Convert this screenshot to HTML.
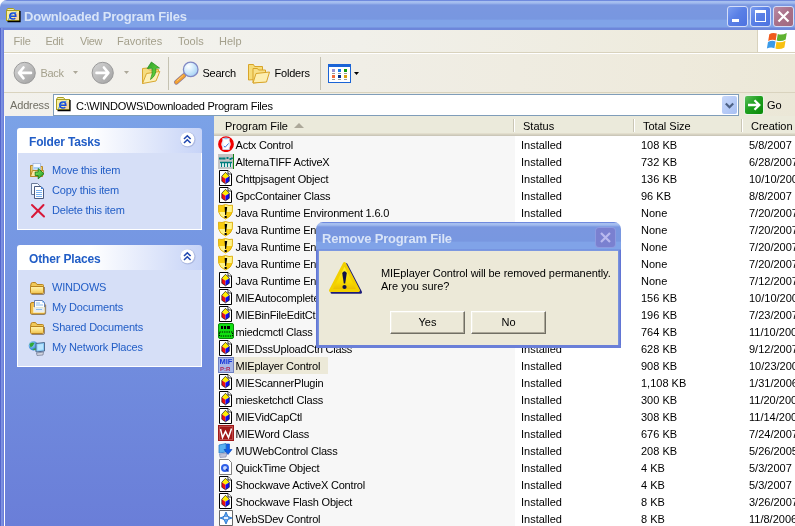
<!DOCTYPE html>
<html><head><meta charset="utf-8">
<style>
*{margin:0;padding:0;box-sizing:border-box}
html,body{width:795px;height:526px;overflow:hidden;background:#fff}
body{position:relative;font-family:"Liberation Sans",sans-serif;font-size:11px;color:#000}
.a{position:absolute}
.t{position:absolute;white-space:nowrap;line-height:13px}
#title{left:0;top:0;width:795px;height:30px;border-radius:7px 0 0 0;
 background:linear-gradient(to bottom,#6f8ade 0,#6f8ade 1px,#a9c0f0 1px,#a2bbee 3px,#7a97e0 5px,#7897e0 19px,#80a3e8 20.5px,#80a3e8 27px,#6d86da 28px,#6d86da 30px)}
#lborder{left:0;top:28px;width:4px;height:498px;background:linear-gradient(to right,#5566cc 0,#5566cc 1px,#7b90e0 1px,#8095e2 2px,#7085dd 3px,#6577d8 4px)}
#menu{left:4px;top:30px;width:791px;height:23px;background:linear-gradient(to right,#f3f3ef 0,#f1f0ea 45%,#eeebdd 85%,#ede9da 100%);border-bottom:1px solid #d8d2bd}
#menuline{left:4px;top:53px;width:791px;height:1px;background:#fff}
#tool{left:4px;top:54px;width:791px;height:39px;background:linear-gradient(to right,#f3f2ee 0,#f0eee6 45%,#eeeadc 85%,#ece8d8 100%);border-bottom:1px solid #d9d3be}
#addr{left:4px;top:93px;width:791px;height:23px;background:linear-gradient(to right,#f2f1ec 0,#efede4 45%,#edeadb 85%,#ebe7d7 100%)}
.grey{color:#a4a08c}
#panel{left:4px;top:116px;width:210px;height:410px;border-left:1px solid #fff;
 background:linear-gradient(to bottom,#7ba2e7,#6a7ed8)}
.box{position:absolute;left:17px;width:185px}
.bh{position:absolute;left:0;top:0;width:185px;height:25px;border-radius:3px 3px 0 0;
 background:linear-gradient(to right,#fff 0,#fff 40%,#c6d3f7 100%)}
.bb{position:absolute;left:0;top:25px;width:185px;background:#d6dff7;border:1px solid #fff;border-top:none}
.bt{position:absolute;left:12px;top:7px;font-weight:bold;font-size:12px;letter-spacing:-0.15px;color:#215dc6;white-space:nowrap;line-height:14px}
.chev{position:absolute;left:164px;top:4px;width:15px;height:15px;border-radius:50%;background:#fff;border:1px solid #c6d3f7;box-shadow:1px 1px 1px #a8b8e0}
.li{position:absolute;left:35px;white-space:nowrap;color:#215dc6;line-height:13px;letter-spacing:-0.2px}
#list{left:214px;top:116px;width:581px;height:410px;background:#fff}
#sortcol{left:214px;top:136px;width:301px;height:390px;background:#f7f7f7}
#hdr{left:214px;top:116px;width:581px;height:20px;background:linear-gradient(to bottom,#ebeadb 0,#ebeadb 17px,#e2decd 17px,#e2decd 18px,#d6d2c2 18px,#d6d2c2 19px,#cbc7b8 19px)}
.hs{position:absolute;top:3px;width:1px;height:13px;background:#cac6b5;box-shadow:1px 0 0 #fff}
.r{position:absolute;height:17px;line-height:19px;white-space:nowrap}
.nm{left:234px;padding-left:1.5px;letter-spacing:-0.2px}
.st{left:521px}
.sz{left:641px}
.dt{left:749px}
.sel{background:#ece9d8;width:94px}
.btn{width:75px;height:23px;border-top:1px solid #fff;border-left:1px solid #fff;border-right:1px solid #716f64;border-bottom:1px solid #716f64;background:#ece9d8;text-align:center;line-height:21px;box-shadow:inset -1px -1px 0 #aca899,inset 1px 1px 0 #f1efe2}
.tbb{width:21px;height:21px;border-radius:3px;border:1px solid #d4ddf8;background:linear-gradient(135deg,#7b9df0 0,#5a80e6 45%,#4d72e0 100%)}
</style></head><body><div style="position:absolute;left:0;top:0;width:795px;height:526px;will-change:transform">

<!-- title bar -->
<div class="a" id="title"></div>
<div class="a" id="lborder"></div>
<svg class="a" style="left:5px;top:7px" width="16" height="16"><path d="M1.5 3.5L2.5 1.5L8.5 1.5L10 3.5Z" fill="#f6f0b0" stroke="#a89e20" stroke-width="1"/>
 <rect x="1.5" y="3.5" width="13" height="10" fill="#f8eea0" stroke="#a89e20" stroke-width="1"/>
 <rect x="9" y="6" width="5" height="7" fill="#f4c8a0" opacity="0.6"/>
 <path d="M15 4V14.5H2.5" fill="none" stroke="#000" stroke-width="1.3"/>
 <path d="M5.3 9.2H10.8Q10.8 6 8 6Q4.8 6 4.8 9Q4.8 12 8 12Q9.5 12 10.3 11.2" fill="none" stroke="#1a4ad8" stroke-width="1.6"/>
 <path d="M3.5 12.8Q5.5 6.5 11.5 5" fill="none" stroke="#2878f0" stroke-width="0.9"/></svg>
<div class="t" style="left:24px;top:9px;font-weight:bold;font-size:13px;letter-spacing:-0.2px;color:#d8e4f8;line-height:15px">Downloaded Program Files</div>

<!-- title buttons -->
<div class="a tbb" style="left:727px;top:6px"></div>
<div class="a" style="left:732px;top:19px;width:7px;height:3px;background:#fff"></div>
<div class="a tbb" style="left:750px;top:6px"></div>
<div class="a" style="left:755px;top:10px;width:11px;height:12px;border:1px solid #fff;border-top:3px solid #fff"></div>
<div class="a tbb" style="left:773px;top:6px;background:linear-gradient(135deg,#b98aa5 0,#a87088 50%,#a06a80 100%)"></div>
<svg class="a" style="left:773px;top:6px" width="21" height="21"><path d="M5.5 5.5L15.5 15.5M15.5 5.5L5.5 15.5" stroke="#fff" stroke-width="2.2"/></svg>

<!-- menu -->
<div class="a" id="menu"></div>
<div class="a" id="menuline"></div>
<div class="t grey" style="left:13.5px;top:35px;letter-spacing:-0.1px">File</div>
<div class="t grey" style="left:45.5px;top:35px;letter-spacing:-0.3px">Edit</div>
<div class="t grey" style="left:80px;top:35px;letter-spacing:-0.4px">View</div>
<div class="t grey" style="left:117px;top:35px">Favorites</div>
<div class="t grey" style="left:178px;top:35px">Tools</div>
<div class="t grey" style="left:219px;top:35px">Help</div>
<div class="a" style="left:757px;top:30px;width:1px;height:22px;background:#d8d2bd"></div>
<div class="a" style="left:758px;top:30px;width:37px;height:22px;background:#fff"></div>
<svg class="a" style="left:766px;top:30px" width="22" height="21">
 <path d="M3.3 4.3Q6.5 2.3 10.8 3.6L9.7 10.4Q6 9 2.2 11Z" fill="#f05a1c"/>
 <path d="M11.8 3.9Q15.8 5.5 20.8 2.9L19.7 9.6Q15.2 12 10.7 10.6Z" fill="#5fb230"/>
 <path d="M2 12Q5.7 10.1 9.5 11.4L8.4 18.2Q4.6 16.6 0.9 18.6Z" fill="#3a9ae8"/>
 <path d="M10.5 11.7Q14.7 13.1 19.5 10.7L18.4 17.4Q13.9 19.9 9.4 18.4Z" fill="#f8c010"/>
</svg>


<!-- toolbar -->
<div class="a" id="tool"></div>
<div class="t grey" style="left:40.5px;top:67px;letter-spacing:-0.3px">Back</div>
<div class="t" style="left:202.5px;top:67px;letter-spacing:-0.25px">Search</div>
<div class="t" style="left:274.5px;top:67px;letter-spacing:-0.2px">Folders</div>
<div class="a" style="left:168px;top:57px;width:1px;height:33px;background:#c5c2b2"></div>
<div class="a" style="left:320px;top:57px;width:1px;height:33px;background:#c5c2b2"></div>

<!-- toolbar icons -->
<svg class="a" style="left:10px;top:58px" width="30" height="30">
 <defs><linearGradient id="gc" x1="0" y1="0" x2="1" y2="1"><stop offset="0" stop-color="#d6d6d6"/><stop offset="1" stop-color="#a0a0a0"/></linearGradient></defs>
 <circle cx="14.7" cy="14.9" r="10.6" fill="url(#gc)" stroke="#9a9a9a" stroke-width="1"/>
 <path d="M13.5 9.5L9 14.9L13.5 20.3M9.5 14.9H21" fill="none" stroke="#fff" stroke-width="2.6" stroke-linecap="round" stroke-linejoin="round"/>
</svg>
<svg class="a" style="left:88px;top:58px" width="30" height="30">
 <circle cx="14.7" cy="14.9" r="10.6" fill="url(#gc)" stroke="#9a9a9a" stroke-width="1"/>
 <path d="M15.9 9.5L20.4 14.9L15.9 20.3M19.9 14.9H8.5" fill="none" stroke="#fff" stroke-width="2.6" stroke-linecap="round" stroke-linejoin="round"/>
</svg>
<svg class="a" style="left:73px;top:71px" width="5" height="3"><path d="M0 0H5L2.5 3Z" fill="#aca899"/></svg>
<svg class="a" style="left:124px;top:71px" width="5" height="3"><path d="M0 0H5L2.5 3Z" fill="#aca899"/></svg>
<svg class="a" style="left:138px;top:58px" width="30" height="30">
 <defs><linearGradient id="ga" x1="0" y1="0" x2="1" y2="1"><stop offset="0" stop-color="#2aa02a"/><stop offset="0.6" stop-color="#58c838"/><stop offset="1" stop-color="#a0f070"/></linearGradient></defs>
 <path d="M4.5 10.5L9.5 10L11.5 12L20.5 11.5L20.5 17L4.5 25.5Z" fill="#f5dc80" stroke="#d8a830" stroke-width="1"/>
 <path d="M4.5 25.5L8.5 15.5L21.8 13.5L18 23Z" fill="#fdf0b8" stroke="#d8a830" stroke-width="1"/>
 <path d="M13.4 4L21.5 10L17.8 10.2Q18.5 17.5 12.5 21.5Q15 15.5 14 10.2L9.2 10.5Z" fill="url(#ga)" stroke="#1f8a1c" stroke-width="0.7"/>
</svg>
<svg class="a" style="left:172px;top:58px" width="30" height="30">
 <path d="M4.3 24.2L12 17.5" stroke="#8a7898" stroke-width="4.6" stroke-linecap="round"/>
 <path d="M4.3 24.2L12 17.5" stroke="#f2a030" stroke-width="3.2" stroke-linecap="round"/>
 <path d="M5 22.8L11 17.6" stroke="#ffc870" stroke-width="1" stroke-linecap="round"/>
 <defs><radialGradient id="gl" cx="0.35" cy="0.3" r="0.75"><stop offset="0" stop-color="#ffffff"/><stop offset="0.45" stop-color="#d4ecfc"/><stop offset="1" stop-color="#a4d0f4"/></radialGradient></defs>
 <circle cx="18.7" cy="11.4" r="7.3" fill="url(#gl)" stroke="#8088c4" stroke-width="1.3"/>
</svg>
<svg class="a" style="left:244px;top:58px" width="30" height="30">
 <path d="M4.5 6.5L9.5 6.5L10.5 8.5L18.5 8.5L18.5 21L4.5 22Z" fill="#f6dc78" stroke="#d8a428" stroke-width="1"/>
 <path d="M9 10.5L13.5 10.5L14.5 12L21.5 12L21.5 23.5L9 25Z" fill="#f8e088" stroke="#d8a428" stroke-width="1"/>
 <path d="M9 25L12 15.5L25.5 14L22.5 24Z" fill="#fdeeb0" stroke="#d8a428" stroke-width="1"/>
</svg>
<svg class="a" style="left:325px;top:58px" width="40" height="30">
 <rect x="3.5" y="6.5" width="22" height="18" fill="#fff" stroke="#1a64d6" stroke-width="1"/>
 <rect x="3" y="6" width="23" height="3" fill="#1a64d6"/>
 <rect x="7" y="11" width="3" height="3" fill="#9a94d4"/><rect x="13" y="11" width="3" height="3" fill="#1a7ae8"/><rect x="19" y="11" width="3" height="3" fill="#109a10"/>
 <rect x="7" y="17" width="3" height="3" fill="#f26a3a"/><rect x="13" y="17" width="3" height="3" fill="#08308a"/><rect x="19" y="17" width="3" height="3" fill="#d8a010"/>
 <rect x="7" y="15" width="3" height="1" fill="#999"/><rect x="13" y="15" width="3" height="1" fill="#999"/><rect x="19" y="15" width="3" height="1" fill="#999"/>
 <rect x="7" y="21" width="3" height="1" fill="#999"/><rect x="13" y="21" width="3" height="1" fill="#999"/><rect x="19" y="21" width="3" height="1" fill="#999"/>
 <path d="M29 14H34L31.5 17Z" fill="#000"/>
</svg>

<!-- address -->
<div class="a" id="addr"></div>
<div class="t" style="left:10px;top:99px;color:#716f64;letter-spacing:-0.15px">Address</div>
<div class="a" style="left:53px;top:94px;width:686px;height:22px;background:#fff;border:1px solid #7f9db9"></div>
<div class="t" style="left:76px;top:100px;letter-spacing:-0.25px">C:\WINDOWS\Downloaded Program Files</div>
<div class="t" style="left:767px;top:99px">Go</div>
<svg class="a" style="left:55px;top:96px" width="16" height="16"><path d="M1.5 3.5L2.5 1.5L8.5 1.5L10 3.5Z" fill="#f6f0b0" stroke="#a89e20" stroke-width="1"/>
 <rect x="1.5" y="3.5" width="13" height="10" fill="#f8eea0" stroke="#a89e20" stroke-width="1"/>
 <rect x="9" y="6" width="5" height="7" fill="#f4c8a0" opacity="0.6"/>
 <path d="M15 4V14.5H2.5" fill="none" stroke="#000" stroke-width="1.3"/>
 <path d="M5.3 9.2H10.8Q10.8 6 8 6Q4.8 6 4.8 9Q4.8 12 8 12Q9.5 12 10.3 11.2" fill="none" stroke="#1a4ad8" stroke-width="1.6"/>
 <path d="M3.5 12.8Q5.5 6.5 11.5 5" fill="none" stroke="#2878f0" stroke-width="0.9"/></svg>
<div class="a" style="left:722px;top:96px;width:15px;height:18px;border-radius:2px;background:linear-gradient(135deg,#c8d8fa 0,#b4c9f6 60%,#a8c0f2 100%)"></div>
<svg class="a" style="left:722px;top:96px" width="15" height="18"><path d="M3.8 7.5L7.5 11.2L11.2 7.5" fill="none" stroke="#4d6185" stroke-width="2.2"/></svg>
<div class="a" style="left:745px;top:96px;width:18px;height:18px;border-radius:2px;background:linear-gradient(135deg,#5cc05c 0,#20a020 45%,#088a08 100%);box-shadow:0 0 0 1px #e8f4e8"></div>
<svg class="a" style="left:745px;top:96px" width="18" height="18"><path d="M3 9H14M9.5 4.2L14.3 9L9.5 13.8" fill="none" stroke="#fff" stroke-width="2.3"/></svg>


<!-- left panel -->
<div class="a" id="panel"></div>
<div class="box" style="top:128px">
  <div class="bh"><div class="bt">Folder Tasks</div><svg class="a" style="left:160px;top:1px" width="21" height="21"><circle cx="10.8" cy="10.8" r="7.8" fill="#a8b4dc" opacity="0.8"/><circle cx="10.3" cy="10.3" r="7" fill="#fff"/><path d="M7 10L10.3 6.8L13.6 10M7 14L10.3 10.8L13.6 14" fill="none" stroke="#2048b0" stroke-width="1.6"/></svg></div>
  <div class="bb" style="height:77px"></div>
  <div class="li" style="top:36px">Move this item</div>
  <div class="li" style="top:56px">Copy this item</div>
  <div class="li" style="top:76px">Delete this item</div>
</div>
<div class="box" style="top:245px">
  <div class="bh"><div class="bt">Other Places</div><svg class="a" style="left:160px;top:1px" width="21" height="21"><circle cx="10.8" cy="10.8" r="7.8" fill="#a8b4dc" opacity="0.8"/><circle cx="10.3" cy="10.3" r="7" fill="#fff"/><path d="M7 10L10.3 6.8L13.6 10M7 14L10.3 10.8L13.6 14" fill="none" stroke="#2048b0" stroke-width="1.6"/></svg></div>
  <div class="bb" style="height:97px"></div>
  <div class="li" style="top:36px">WINDOWS</div>
  <div class="li" style="top:56px">My Documents</div>
  <div class="li" style="top:76px">Shared Documents</div>
  <div class="li" style="top:96px">My Network Places</div>
</div>

<!-- panel icons -->
<svg class="a" style="left:29px;top:163px" width="17" height="17">
 <defs><linearGradient id="mg" x1="0" y1="0" x2="1" y2="1"><stop offset="0" stop-color="#90f070"/><stop offset="1" stop-color="#189818"/></linearGradient></defs>
 <path d="M1.5 2.5H5.5L6.5 3.5H13.5V13.5H1.5Z" fill="#ecc860" stroke="#b88a28" stroke-width="1"/>
 <rect x="4" y="0.5" width="7.5" height="6.5" fill="#f2f8ff" stroke="#98b0d8" stroke-width="0.7"/>
 <rect x="4.5" y="4" width="6.5" height="2" fill="#a8d0f8"/>
 <path d="M1.5 13.5L3.5 7.5H14.5L13.5 13.5Z" fill="#fae8a8" stroke="#b88a28" stroke-width="1"/>
 <path d="M6.2 9H9.2V5.6L15 10.7L9.2 15.8V12.5H6.2Z" fill="url(#mg)" stroke="#0e7010" stroke-width="0.8"/>
</svg>
<svg class="a" style="left:29px;top:182px" width="17" height="18">
 <path d="M2.5 1.5H8.5L10.5 3.5V12.5H2.5Z" fill="#f4f8ff" stroke="#6a7a98" stroke-width="1"/>
 <path d="M5.5 4.5H12L14.5 7V16.5H5.5Z" fill="#fff" stroke="#4a5a80" stroke-width="1"/>
 <path d="M12 4.5L14.5 7H12Z" fill="#3a80e0"/>
 <path d="M7 8.5H13M7 10.5H13M7 12.5H13M7 14.5H13" stroke="#78b0f0" stroke-width="1"/>
</svg>
<svg class="a" style="left:29px;top:202px" width="17" height="17">
 <path d="M3 3L15 14.5M14.5 3L3 15" stroke="#d81838" stroke-width="2" stroke-linecap="round"/>
</svg>
<svg class="a" style="left:29px;top:281px" width="17" height="15"><defs><linearGradient id="fy" x1="0" y1="0" x2="0" y2="1"><stop offset="0" stop-color="#fff4b0"/><stop offset="0.5" stop-color="#fbe080"/><stop offset="1" stop-color="#eec050"/></linearGradient></defs><path d="M2 3Q2 1.5 3.5 1.5H6.5L8 3.5H13.5Q14.5 3.5 14.5 4.5V5.5H1.5Z" fill="#f0c858" stroke="#b88420" stroke-width="1"/><path d="M1.5 5.5H14.5V11.5Q14.5 12.5 13.5 12.5H2.5Q1.5 12.5 1.5 11.5Z" fill="url(#fy)" stroke="#b88420" stroke-width="1"/><path d="M2.5 13.5H14Q15.5 13.5 15.5 12V6" fill="none" stroke="#6a5030" stroke-width="0.9" opacity="0.7"/></svg>
<svg class="a" style="left:29px;top:300px" width="18" height="16">
 <path d="M1.5 4Q1.5 2.5 3 2.5H5L6 3.5H15Q16 3.5 16 4.5V13Q16 14 15 14H2.5Q1.5 14 1.5 13Z" fill="#f0c050" stroke="#b88420" stroke-width="1"/>
 <path d="M5.5 0.5H13.5L15.5 2.5V11H5.5Z" fill="#fff" stroke="#6a80b0" stroke-width="1"/>
 <path d="M13.5 0.5L15.5 2.5H13.5Z" fill="#3890f0"/>
 <path d="M7 3H11M7 5H14M7 7.5H14" stroke="#88bcf0" stroke-width="1"/>
 <rect x="4.5" y="7.5" width="11" height="5" fill="#e8ecf0" stroke="#fff4c0" stroke-width="0.6"/>
 <path d="M7 9.5H13" stroke="#88bcf0" stroke-width="1"/>
 <path d="M2.5 14.5H15.5Q16.7 14.5 16.7 13V5" fill="none" stroke="#5a4a30" stroke-width="0.8" opacity="0.6"/>
</svg>
<svg class="a" style="left:29px;top:321px" width="17" height="15"><defs><linearGradient id="fy" x1="0" y1="0" x2="0" y2="1"><stop offset="0" stop-color="#fff4b0"/><stop offset="0.5" stop-color="#fbe080"/><stop offset="1" stop-color="#eec050"/></linearGradient></defs><path d="M2 3Q2 1.5 3.5 1.5H6.5L8 3.5H13.5Q14.5 3.5 14.5 4.5V5.5H1.5Z" fill="#f0c858" stroke="#b88420" stroke-width="1"/><path d="M1.5 5.5H14.5V11.5Q14.5 12.5 13.5 12.5H2.5Q1.5 12.5 1.5 11.5Z" fill="url(#fy)" stroke="#b88420" stroke-width="1"/><path d="M2.5 13.5H14Q15.5 13.5 15.5 12V6" fill="none" stroke="#6a5030" stroke-width="0.9" opacity="0.7"/></svg>
<svg class="a" style="left:28px;top:340px" width="18" height="16">
 <defs><radialGradient id="gg" cx="0.35" cy="0.35" r="0.7"><stop offset="0" stop-color="#a8e0ff"/><stop offset="1" stop-color="#1870c8"/></radialGradient></defs>
 <circle cx="5.3" cy="5.8" r="4.6" fill="url(#gg)"/><path d="M1.5 4Q3.5 1.5 6.5 3Q5.5 6 2.5 7.5Z" fill="#30a838"/><path d="M4.5 9.5Q6.5 7.5 9.5 8.5L8 10.5Z" fill="#30a838"/>
 <path d="M8 3.5L16.5 2.5V11L8 12Z" fill="#88ccf8" stroke="#506a90" stroke-width="1"/>
 <path d="M9.5 4.5L15 4V9.5L9.5 10.3Z" fill="#b8e4ff"/>
 <path d="M8.5 13L15.5 12L15 15L9 15.5Z" fill="#d0d4e0" stroke="#707890" stroke-width="0.7"/>
</svg>

<!-- list -->
<div class="a" id="list"></div>
<div class="a" id="sortcol"></div>
<div class="a" id="hdr">
  <div class="t" style="left:11px;top:4px">Program File</div>
  <div class="a" style="left:80px;top:7px;width:0;height:0;border-left:5px solid transparent;border-right:5px solid transparent;border-bottom:5px solid #aca899"></div>
  <div class="hs" style="left:299px"></div>
  <div class="t" style="left:309px;top:4px">Status</div>
  <div class="hs" style="left:419px"></div>
  <div class="t" style="left:429px;top:4px">Total Size</div>
  <div class="hs" style="left:527px"></div>
  <div class="t" style="left:537px;top:4px">Creation</div>
</div>
<div id="rows">
<div class="r nm" style="top:136px">Actx Control</div><div class="r st" style="top:136px">Installed</div><div class="r sz" style="top:136px">108 KB</div><div class="r dt" style="top:136px">5/8/2007</div>
<div class="r nm" style="top:153px">AlternaTIFF ActiveX</div><div class="r st" style="top:153px">Installed</div><div class="r sz" style="top:153px">732 KB</div><div class="r dt" style="top:153px">6/28/2007</div>
<div class="r nm" style="top:170px">Chttpjsagent Object</div><div class="r st" style="top:170px">Installed</div><div class="r sz" style="top:170px">136 KB</div><div class="r dt" style="top:170px">10/10/2006</div>
<div class="r nm" style="top:187px">GpcContainer Class</div><div class="r st" style="top:187px">Installed</div><div class="r sz" style="top:187px">96 KB</div><div class="r dt" style="top:187px">8/8/2007</div>
<div class="r nm" style="top:204px">Java Runtime Environment 1.6.0</div><div class="r st" style="top:204px">Installed</div><div class="r sz" style="top:204px">None</div><div class="r dt" style="top:204px">7/20/2007</div>
<div class="r nm" style="top:221px">Java Runtime Environment 1.6.0</div><div class="r st" style="top:221px">Installed</div><div class="r sz" style="top:221px">None</div><div class="r dt" style="top:221px">7/20/2007</div>
<div class="r nm" style="top:238px">Java Runtime Environment 1.6.0</div><div class="r st" style="top:238px">Installed</div><div class="r sz" style="top:238px">None</div><div class="r dt" style="top:238px">7/20/2007</div>
<div class="r nm" style="top:255px">Java Runtime Environment 1.6.0</div><div class="r st" style="top:255px">Installed</div><div class="r sz" style="top:255px">None</div><div class="r dt" style="top:255px">7/20/2007</div>
<div class="r nm" style="top:272px">Java Runtime Environment 1.6.0</div><div class="r st" style="top:272px">Installed</div><div class="r sz" style="top:272px">None</div><div class="r dt" style="top:272px">7/12/2007</div>
<div class="r nm" style="top:289px">MIEAutocompleteCtl Class</div><div class="r st" style="top:289px">Installed</div><div class="r sz" style="top:289px">156 KB</div><div class="r dt" style="top:289px">10/10/2006</div>
<div class="r nm" style="top:306px">MIEBinFileEditCtl Class</div><div class="r st" style="top:306px">Installed</div><div class="r sz" style="top:306px">196 KB</div><div class="r dt" style="top:306px">7/23/2007</div>
<div class="r nm" style="top:323px">miedcmctl Class</div><div class="r st" style="top:323px">Installed</div><div class="r sz" style="top:323px">764 KB</div><div class="r dt" style="top:323px">11/10/2006</div>
<div class="r nm" style="top:340px">MIEDssUploadCtrl Class</div><div class="r st" style="top:340px">Installed</div><div class="r sz" style="top:340px">628 KB</div><div class="r dt" style="top:340px">9/12/2007</div>
<div class="r nm sel" style="top:357px">MIEplayer Control</div><div class="r st" style="top:357px">Installed</div><div class="r sz" style="top:357px">908 KB</div><div class="r dt" style="top:357px">10/23/2006</div>
<div class="r nm" style="top:374px">MIEScannerPlugin</div><div class="r st" style="top:374px">Installed</div><div class="r sz" style="top:374px">1,108 KB</div><div class="r dt" style="top:374px">1/31/2006</div>
<div class="r nm" style="top:391px">miesketchctl Class</div><div class="r st" style="top:391px">Installed</div><div class="r sz" style="top:391px">300 KB</div><div class="r dt" style="top:391px">11/20/2006</div>
<div class="r nm" style="top:408px">MIEVidCapCtl</div><div class="r st" style="top:408px">Installed</div><div class="r sz" style="top:408px">308 KB</div><div class="r dt" style="top:408px">11/14/2006</div>
<div class="r nm" style="top:425px">MIEWord Class</div><div class="r st" style="top:425px">Installed</div><div class="r sz" style="top:425px">676 KB</div><div class="r dt" style="top:425px">7/24/2007</div>
<div class="r nm" style="top:442px">MUWebControl Class</div><div class="r st" style="top:442px">Installed</div><div class="r sz" style="top:442px">208 KB</div><div class="r dt" style="top:442px">5/26/2005</div>
<div class="r nm" style="top:459px">QuickTime Object</div><div class="r st" style="top:459px">Installed</div><div class="r sz" style="top:459px">4 KB</div><div class="r dt" style="top:459px">5/3/2007</div>
<div class="r nm" style="top:476px">Shockwave ActiveX Control</div><div class="r st" style="top:476px">Installed</div><div class="r sz" style="top:476px">4 KB</div><div class="r dt" style="top:476px">5/3/2007</div>
<div class="r nm" style="top:493px">Shockwave Flash Object</div><div class="r st" style="top:493px">Installed</div><div class="r sz" style="top:493px">8 KB</div><div class="r dt" style="top:493px">3/26/2007</div>
<div class="r nm" style="top:510px">WebSDev Control</div><div class="r st" style="top:510px">Installed</div><div class="r sz" style="top:510px">8 KB</div><div class="r dt" style="top:510px">11/8/2006</div>
</div>

<div id="licons">
<svg class="a" style="left:218px;top:136px" width="16" height="16"><circle cx="8" cy="8.2" r="6.3" fill="#fff" stroke="#f00000" stroke-width="3.2"/><rect x="4.8" y="2.5" width="6.4" height="11" fill="#fff" stroke="#c8dcf4" stroke-width="0.8"/><rect x="6.5" y="1.5" width="3" height="1.8" fill="#90c0f0"/><path d="M5.8 10L7.2 11.2L10.5 7.5" fill="none" stroke="#3a78e0" stroke-width="1"/></svg>
<svg class="a" style="left:218px;top:153px" width="16" height="16"><rect x="0" y="1" width="15" height="15" fill="#c4c4c4"/><path d="M15.5 1V16.5H0" fill="none" stroke="#108010" stroke-width="1"/><path d="M1 5.5H3M4 4.5V6.5M5 5.5H7.5M8.5 5H10.5M11.5 6H13.5M14 4.5V6" stroke="#007c7c" stroke-width="1.8"/><rect x="2" y="9" width="12" height="5" fill="#fff"/><path d="M3.5 9V14M6.5 9V14M9.5 9V14M12.5 9V14M2 9.5H14" stroke="#007c7c" stroke-width="1.3"/></svg>
<svg class="a" style="left:218px;top:170px" width="16" height="16"><path d="M1.5 0.5H10L13.5 4V15.5H1.5Z" fill="#fff" stroke="#000" stroke-width="1"/><path d="M10 0.5V4H13.5" fill="#fff" stroke="#000" stroke-width="0.8"/><path d="M7.5 2.3L11.3 6.2L7.5 8.7L3.8 6.2Z" fill="#ffee00"/><path d="M3.8 6.2L7.5 8.7V13.8L3.8 11.3Z" fill="#f01010"/><path d="M7.5 8.7L11.3 6.2V11.3L7.5 13.8Z" fill="#1010f0"/><path d="M3.8 6.2L7.5 2.3L11.3 6.2V11.3L7.5 13.8L3.8 11.3Z" fill="none" stroke="#000" stroke-width="0.6"/></svg>
<svg class="a" style="left:218px;top:187px" width="16" height="16"><path d="M1.5 0.5H10L13.5 4V15.5H1.5Z" fill="#fff" stroke="#000" stroke-width="1"/><path d="M10 0.5V4H13.5" fill="#fff" stroke="#000" stroke-width="0.8"/><path d="M7.5 2.3L11.3 6.2L7.5 8.7L3.8 6.2Z" fill="#ffee00"/><path d="M3.8 6.2L7.5 8.7V13.8L3.8 11.3Z" fill="#f01010"/><path d="M7.5 8.7L11.3 6.2V11.3L7.5 13.8Z" fill="#1010f0"/><path d="M3.8 6.2L7.5 2.3L11.3 6.2V11.3L7.5 13.8L3.8 11.3Z" fill="none" stroke="#000" stroke-width="0.6"/></svg>
<svg class="a" style="left:218px;top:204px" width="16" height="16"><defs><clipPath id="jc"><path d="M0.5 1.2Q4 2.2 7.5 0.5Q11 2.2 14.5 1.2L14.3 8Q13.5 12.5 7.5 15Q1.5 12.5 0.7 8Z"/></clipPath></defs><g clip-path="url(#jc)"><rect x="0" y="0" width="7.5" height="8" fill="#f8cc10"/><rect x="7.5" y="0" width="8" height="8" fill="#fff48a"/><rect x="0" y="8" width="7.5" height="8" fill="#fff48a"/><rect x="7.5" y="8" width="8" height="8" fill="#f8cc10"/></g><path d="M0.5 1.2Q4 2.2 7.5 0.5Q11 2.2 14.5 1.2L14.3 8Q13.5 12.5 7.5 15Q1.5 12.5 0.7 8Z" fill="none" stroke="#dcac00" stroke-width="0.9"/><path d="M6.6 3H9.2L8.1 11H7.1Z" fill="#000"/><rect x="6.6" y="12" width="2.1" height="2" fill="#000"/></svg>
<svg class="a" style="left:218px;top:221px" width="16" height="16"><defs><clipPath id="jc"><path d="M0.5 1.2Q4 2.2 7.5 0.5Q11 2.2 14.5 1.2L14.3 8Q13.5 12.5 7.5 15Q1.5 12.5 0.7 8Z"/></clipPath></defs><g clip-path="url(#jc)"><rect x="0" y="0" width="7.5" height="8" fill="#f8cc10"/><rect x="7.5" y="0" width="8" height="8" fill="#fff48a"/><rect x="0" y="8" width="7.5" height="8" fill="#fff48a"/><rect x="7.5" y="8" width="8" height="8" fill="#f8cc10"/></g><path d="M0.5 1.2Q4 2.2 7.5 0.5Q11 2.2 14.5 1.2L14.3 8Q13.5 12.5 7.5 15Q1.5 12.5 0.7 8Z" fill="none" stroke="#dcac00" stroke-width="0.9"/><path d="M6.6 3H9.2L8.1 11H7.1Z" fill="#000"/><rect x="6.6" y="12" width="2.1" height="2" fill="#000"/></svg>
<svg class="a" style="left:218px;top:238px" width="16" height="16"><defs><clipPath id="jc"><path d="M0.5 1.2Q4 2.2 7.5 0.5Q11 2.2 14.5 1.2L14.3 8Q13.5 12.5 7.5 15Q1.5 12.5 0.7 8Z"/></clipPath></defs><g clip-path="url(#jc)"><rect x="0" y="0" width="7.5" height="8" fill="#f8cc10"/><rect x="7.5" y="0" width="8" height="8" fill="#fff48a"/><rect x="0" y="8" width="7.5" height="8" fill="#fff48a"/><rect x="7.5" y="8" width="8" height="8" fill="#f8cc10"/></g><path d="M0.5 1.2Q4 2.2 7.5 0.5Q11 2.2 14.5 1.2L14.3 8Q13.5 12.5 7.5 15Q1.5 12.5 0.7 8Z" fill="none" stroke="#dcac00" stroke-width="0.9"/><path d="M6.6 3H9.2L8.1 11H7.1Z" fill="#000"/><rect x="6.6" y="12" width="2.1" height="2" fill="#000"/></svg>
<svg class="a" style="left:218px;top:255px" width="16" height="16"><defs><clipPath id="jc"><path d="M0.5 1.2Q4 2.2 7.5 0.5Q11 2.2 14.5 1.2L14.3 8Q13.5 12.5 7.5 15Q1.5 12.5 0.7 8Z"/></clipPath></defs><g clip-path="url(#jc)"><rect x="0" y="0" width="7.5" height="8" fill="#f8cc10"/><rect x="7.5" y="0" width="8" height="8" fill="#fff48a"/><rect x="0" y="8" width="7.5" height="8" fill="#fff48a"/><rect x="7.5" y="8" width="8" height="8" fill="#f8cc10"/></g><path d="M0.5 1.2Q4 2.2 7.5 0.5Q11 2.2 14.5 1.2L14.3 8Q13.5 12.5 7.5 15Q1.5 12.5 0.7 8Z" fill="none" stroke="#dcac00" stroke-width="0.9"/><path d="M6.6 3H9.2L8.1 11H7.1Z" fill="#000"/><rect x="6.6" y="12" width="2.1" height="2" fill="#000"/></svg>
<svg class="a" style="left:218px;top:272px" width="16" height="16"><path d="M1.5 0.5H10L13.5 4V15.5H1.5Z" fill="#fff" stroke="#000" stroke-width="1"/><path d="M10 0.5V4H13.5" fill="#fff" stroke="#000" stroke-width="0.8"/><path d="M7.5 2.3L11.3 6.2L7.5 8.7L3.8 6.2Z" fill="#ffee00"/><path d="M3.8 6.2L7.5 8.7V13.8L3.8 11.3Z" fill="#f01010"/><path d="M7.5 8.7L11.3 6.2V11.3L7.5 13.8Z" fill="#1010f0"/><path d="M3.8 6.2L7.5 2.3L11.3 6.2V11.3L7.5 13.8L3.8 11.3Z" fill="none" stroke="#000" stroke-width="0.6"/></svg>
<svg class="a" style="left:218px;top:289px" width="16" height="16"><path d="M1.5 0.5H10L13.5 4V15.5H1.5Z" fill="#fff" stroke="#000" stroke-width="1"/><path d="M10 0.5V4H13.5" fill="#fff" stroke="#000" stroke-width="0.8"/><path d="M7.5 2.3L11.3 6.2L7.5 8.7L3.8 6.2Z" fill="#ffee00"/><path d="M3.8 6.2L7.5 8.7V13.8L3.8 11.3Z" fill="#f01010"/><path d="M7.5 8.7L11.3 6.2V11.3L7.5 13.8Z" fill="#1010f0"/><path d="M3.8 6.2L7.5 2.3L11.3 6.2V11.3L7.5 13.8L3.8 11.3Z" fill="none" stroke="#000" stroke-width="0.6"/></svg>
<svg class="a" style="left:218px;top:306px" width="16" height="16"><path d="M1.5 0.5H10L13.5 4V15.5H1.5Z" fill="#fff" stroke="#000" stroke-width="1"/><path d="M10 0.5V4H13.5" fill="#fff" stroke="#000" stroke-width="0.8"/><path d="M7.5 2.3L11.3 6.2L7.5 8.7L3.8 6.2Z" fill="#ffee00"/><path d="M3.8 6.2L7.5 8.7V13.8L3.8 11.3Z" fill="#f01010"/><path d="M7.5 8.7L11.3 6.2V11.3L7.5 13.8Z" fill="#1010f0"/><path d="M3.8 6.2L7.5 2.3L11.3 6.2V11.3L7.5 13.8L3.8 11.3Z" fill="none" stroke="#000" stroke-width="0.6"/></svg>
<svg class="a" style="left:218px;top:323px" width="16" height="16"><rect x="0.5" y="0.5" width="15" height="15" rx="1.5" fill="#10e010" stroke="#088808" stroke-width="1"/><path d="M3 3H5V6H3ZM6 3H8V6H6ZM9 3H12V6H9Z" fill="#000"/><path d="M1.5 9H14.5V13H1.5Z" fill="none" stroke="#000" stroke-width="1" stroke-dasharray="1.3 1"/></svg>
<svg class="a" style="left:218px;top:340px" width="16" height="16"><path d="M1.5 0.5H10L13.5 4V15.5H1.5Z" fill="#fff" stroke="#000" stroke-width="1"/><path d="M10 0.5V4H13.5" fill="#fff" stroke="#000" stroke-width="0.8"/><path d="M7.5 2.3L11.3 6.2L7.5 8.7L3.8 6.2Z" fill="#ffee00"/><path d="M3.8 6.2L7.5 8.7V13.8L3.8 11.3Z" fill="#f01010"/><path d="M7.5 8.7L11.3 6.2V11.3L7.5 13.8Z" fill="#1010f0"/><path d="M3.8 6.2L7.5 2.3L11.3 6.2V11.3L7.5 13.8L3.8 11.3Z" fill="none" stroke="#000" stroke-width="0.6"/></svg>
<svg class="a" style="left:218px;top:357px" width="16" height="16"><rect x="0.5" y="0.5" width="15" height="15" fill="#a8b8e8" stroke="#7080c0" stroke-width="1"/><text x="1.5" y="7.3" font-family="Liberation Sans" font-size="7.5" font-weight="bold" fill="#1838d8">MIF</text><text x="2" y="14" font-family="Liberation Sans" font-size="6" font-weight="bold" fill="#b02858">P:R</text></svg>
<svg class="a" style="left:218px;top:374px" width="16" height="16"><path d="M1.5 0.5H10L13.5 4V15.5H1.5Z" fill="#fff" stroke="#000" stroke-width="1"/><path d="M10 0.5V4H13.5" fill="#fff" stroke="#000" stroke-width="0.8"/><path d="M7.5 2.3L11.3 6.2L7.5 8.7L3.8 6.2Z" fill="#ffee00"/><path d="M3.8 6.2L7.5 8.7V13.8L3.8 11.3Z" fill="#f01010"/><path d="M7.5 8.7L11.3 6.2V11.3L7.5 13.8Z" fill="#1010f0"/><path d="M3.8 6.2L7.5 2.3L11.3 6.2V11.3L7.5 13.8L3.8 11.3Z" fill="none" stroke="#000" stroke-width="0.6"/></svg>
<svg class="a" style="left:218px;top:391px" width="16" height="16"><path d="M1.5 0.5H10L13.5 4V15.5H1.5Z" fill="#fff" stroke="#000" stroke-width="1"/><path d="M10 0.5V4H13.5" fill="#fff" stroke="#000" stroke-width="0.8"/><path d="M7.5 2.3L11.3 6.2L7.5 8.7L3.8 6.2Z" fill="#ffee00"/><path d="M3.8 6.2L7.5 8.7V13.8L3.8 11.3Z" fill="#f01010"/><path d="M7.5 8.7L11.3 6.2V11.3L7.5 13.8Z" fill="#1010f0"/><path d="M3.8 6.2L7.5 2.3L11.3 6.2V11.3L7.5 13.8L3.8 11.3Z" fill="none" stroke="#000" stroke-width="0.6"/></svg>
<svg class="a" style="left:218px;top:408px" width="16" height="16"><path d="M1.5 0.5H10L13.5 4V15.5H1.5Z" fill="#fff" stroke="#000" stroke-width="1"/><path d="M10 0.5V4H13.5" fill="#fff" stroke="#000" stroke-width="0.8"/><path d="M7.5 2.3L11.3 6.2L7.5 8.7L3.8 6.2Z" fill="#ffee00"/><path d="M3.8 6.2L7.5 8.7V13.8L3.8 11.3Z" fill="#f01010"/><path d="M7.5 8.7L11.3 6.2V11.3L7.5 13.8Z" fill="#1010f0"/><path d="M3.8 6.2L7.5 2.3L11.3 6.2V11.3L7.5 13.8L3.8 11.3Z" fill="none" stroke="#000" stroke-width="0.6"/></svg>
<svg class="a" style="left:218px;top:425px" width="16" height="16"><rect x="0" y="0" width="16" height="16" fill="#a01818"/><rect x="1.5" y="1.5" width="13" height="13" fill="none" stroke="#e8a0a0" stroke-width="0.8" stroke-dasharray="1 1"/><path d="M2.5 4L4.5 12.5L7.5 6.5L10.5 12.5L13.5 3.5" fill="none" stroke="#fff" stroke-width="1.5"/></svg>
<svg class="a" style="left:218px;top:442px" width="16" height="16"><path d="M1 3L8 1.5V10L1 11Z" fill="#58b0f0" stroke="#2a78c8" stroke-width="0.8"/><path d="M1.5 12L9 11L8 15L2 15.5Z" fill="#c0c4d8" stroke="#7880a8" stroke-width="0.6"/><path d="M8.5 2H11.5V7.5H14L10 12.5L6 7.5H8.5Z" fill="#1060e8" stroke="#0840b8" stroke-width="0.6"/></svg>
<svg class="a" style="left:218px;top:459px" width="16" height="16"><path d="M1.5 0.5H10.5L13.5 3.5V15.5H1.5Z" fill="#fff" stroke="#606060" stroke-width="0.8"/><circle cx="7" cy="9" r="4" fill="#3060e8"/><circle cx="7" cy="9" r="2" fill="#c8d8ff"/><path d="M8 10L10.5 12.5" stroke="#1030a0" stroke-width="1.4"/></svg>
<svg class="a" style="left:218px;top:476px" width="16" height="16"><path d="M1.5 0.5H10L13.5 4V15.5H1.5Z" fill="#fff" stroke="#000" stroke-width="1"/><path d="M10 0.5V4H13.5" fill="#fff" stroke="#000" stroke-width="0.8"/><path d="M7.5 2.3L11.3 6.2L7.5 8.7L3.8 6.2Z" fill="#ffee00"/><path d="M3.8 6.2L7.5 8.7V13.8L3.8 11.3Z" fill="#f01010"/><path d="M7.5 8.7L11.3 6.2V11.3L7.5 13.8Z" fill="#1010f0"/><path d="M3.8 6.2L7.5 2.3L11.3 6.2V11.3L7.5 13.8L3.8 11.3Z" fill="none" stroke="#000" stroke-width="0.6"/></svg>
<svg class="a" style="left:218px;top:493px" width="16" height="16"><path d="M1.5 0.5H10L13.5 4V15.5H1.5Z" fill="#fff" stroke="#000" stroke-width="1"/><path d="M10 0.5V4H13.5" fill="#fff" stroke="#000" stroke-width="0.8"/><path d="M7.5 2.3L11.3 6.2L7.5 8.7L3.8 6.2Z" fill="#ffee00"/><path d="M3.8 6.2L7.5 8.7V13.8L3.8 11.3Z" fill="#f01010"/><path d="M7.5 8.7L11.3 6.2V11.3L7.5 13.8Z" fill="#1010f0"/><path d="M3.8 6.2L7.5 2.3L11.3 6.2V11.3L7.5 13.8L3.8 11.3Z" fill="none" stroke="#000" stroke-width="0.6"/></svg>
<svg class="a" style="left:218px;top:510px" width="16" height="16"><path d="M1.5 0.5H14.5V15.5H1.5Z" fill="#fff" stroke="#404040" stroke-width="0.8"/><path d="M8 2L10 6.5L14 8L10 9.5L8 14L6 9.5L2 8L6 6.5Z" fill="#60a8f0" stroke="#1868c8" stroke-width="0.8"/><rect x="5.5" y="6.5" width="5" height="3" fill="#e8f0ff" stroke="#1868c8" stroke-width="0.5"/></svg>
</div>

<!-- dialog -->
<div class="a" style="left:316px;top:222px;width:305px;height:126px;border-radius:7px 7px 0 0;background:linear-gradient(to bottom,#6f8ade 0,#6f8ade 1px,#a9c0f0 1px,#a2bbee 3px,#7a97e0 5px,#7897e0 19px,#80a3e8 20.5px,#80a3e8 27px,#6d86da 28px,#6d86da 30px);"></div>
<div class="a" style="left:316px;top:250px;width:305px;height:98px;background:linear-gradient(to right,#5d6fd2,#7d98e0 3px,#7d98e0 302px,#5d6fd2)"></div>
<div class="a" style="left:319px;top:251px;width:299px;height:94px;background:#ece9d8"></div>
<div class="a" style="left:316px;top:345px;width:305px;height:3px;background:#6a7fd8"></div>
<div class="t" style="left:322px;top:231px;font-weight:bold;font-size:13px;letter-spacing:-0.2px;color:#d8e4f8;line-height:15px">Remove Program File</div>
<div class="a" style="left:596px;top:228px;width:19px;height:19px;border-radius:3px;background:#7a80d0;box-shadow:0 0 0 1px #8d9ae0"></div><svg class="a" style="left:596px;top:228px" width="19" height="19"><path d="M5 5L14 14M14 5L5 14" stroke="#b9b9ef" stroke-width="2.2"/></svg>
<svg class="a" style="left:325px;top:255px" width="45" height="45"><path d="M21 9.5L35.5 37.3L7 37.3Z" fill="#1c1c7a" stroke="#1c1c7a" stroke-width="3" stroke-linejoin="round"/><defs><linearGradient id="wy" x1="0" y1="0" x2="0" y2="1"><stop offset="0" stop-color="#fff23a"/><stop offset="0.7" stop-color="#f8da00"/><stop offset="1" stop-color="#e8b800"/></linearGradient></defs><path d="M19.5 8.5L33.5 35.5L5.5 35.5Z" fill="url(#wy)" stroke="#f2d000" stroke-width="3" stroke-linejoin="round"/><path d="M17.2 18Q19.5 14.5 21.8 18L20.2 28.5L18.8 28.5Z" fill="#10104a"/><circle cx="19.5" cy="32" r="2.1" fill="#10104a"/></svg>
<div class="t" style="left:381px;top:267px;letter-spacing:-0.08px">MIEplayer Control will be removed permanently.</div>
<div class="t" style="left:381px;top:280px">Are you sure?</div>
<div class="a btn" style="left:390px;top:311px">Yes</div>
<div class="a btn" style="left:471px;top:311px">No</div>

</div></body></html>
